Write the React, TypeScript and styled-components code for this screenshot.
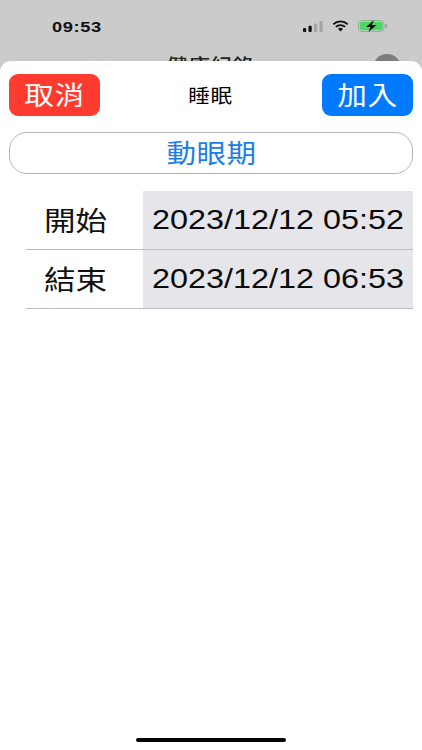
import React from "react";
import styled, { createGlobalStyle } from "styled-components";

const Global = createGlobalStyle`
  html, body { margin: 0; padding: 0; background: #fff; }
  #root { width: 422px; height: 750px; overflow: hidden; }
  * { box-sizing: border-box; }
`;
const cjk = `"Noto Sans CJK TC", "Noto Sans CJK JP", sans-serif`;
const Page = styled.div`
  width: 422px; height: 750px; display: flex; flex-direction: column;
  background: #cbcbcb; font-family: "Liberation Sans", ${cjk};
`;
const Backdrop = styled.header`
  height: 61px; flex: none; overflow: hidden; display: flex; flex-direction: column;
`;
const StatusBar = styled.div`
  height: 52px; flex: none; display: flex; align-items: center; justify-content: space-between;
  padding: 0 35px 0 52px;
`;
const Wide = styled.span<{ $x?: number; $origin?: string }>`
  display: inline-block;
  transform: scaleX(${(p) => p.$x ?? 1.14});
  transform-origin: ${(p) => p.$origin ?? "center"};
`;
const Time = styled.span`
  font-size: 15px; font-weight: 700; color: #111; letter-spacing: 0.5px;
`;
const StatusIcons = styled.div`display: flex; align-items: center; gap: 9px;`;
const NavRow = styled.div`
  position: relative; display: flex; justify-content: center; height: 30px;
`;
const NavTitle = styled.span`font: 500 19px/22px ${cjk}; color: #222; letter-spacing: 0.3px; margin-top: 2px;`;
const Avatar = styled.span`
  position: absolute; right: 21px; top: 2px; width: 28px; height: 28px; border-radius: 50%; background: #7d7d7d;
`;
const Sheet = styled.main`
  flex: 1; background: #fff; border-radius: 11px 11px 0 0; padding: 13px 9px 8px;
  display: flex; flex-direction: column;
`;
const TopBar = styled.div`display: flex; align-items: center; justify-content: space-between; height: 42px;`;
const ActionButton = styled.button<{ $bg: string }>`
  width: 91px; height: 42px; border: 0; border-radius: 9px; background: ${(p) => p.$bg}; color: #fff;
  font: 400 26px/40px ${cjk}; letter-spacing: 0.5px; padding: 0 0 2px;
`;
const SheetTitle = styled.h1`margin: 0; font: 400 19px/22px ${cjk}; color: #000; letter-spacing: 0.5px;`;
const Segment = styled.button`
  margin-top: 16px; height: 42px; flex: none; width: 100%; background: #fff; border: 1px solid #b5b5b9; border-radius: 18px;
  color: #1c7fe6; font: 400 26px/36px ${cjk}; letter-spacing: 0.3px; padding: 0 0 3px;
`;
const Table = styled.section`margin: 17px 0 0 17px; display: flex; flex-direction: column;`;
const Row = styled.div`
  height: 59px; display: grid; grid-template-columns: 117px 1fr; border-bottom: 1px solid #bdbdc2;
`;
const Label = styled.div`
  font: 400 27px/57px ${cjk}; color: #111; padding-left: 18px; letter-spacing: 0;
`;
const Value = styled.div`
  background: #e5e5ea; color: #0a0a0a; font: 400 28px/58px "Liberation Sans", sans-serif;
  text-align: center; white-space: nowrap;
`;
const Spacer = styled.div`flex: 1;`;
const HomeBar = styled.div`
  width: 150px; height: 4px; background: #050505; border-radius: 2px; align-self: center;
`;

const Signal = () => (
  <svg width="20" height="11" viewBox="0 0 20 11">
    <rect x="0" y="7" width="3.2" height="4" rx="1" fill="#111" />
    <rect x="5.5" y="4.8" width="3.2" height="6.2" rx="1" fill="#111" />
    <rect x="11" y="2.4" width="3.2" height="8.6" rx="1" fill="#a5a5a5" />
    <rect x="16.5" y="0" width="3.2" height="11" rx="1" fill="#a5a5a5" />
  </svg>
);
const Wifi = () => (
  <svg width="17" height="12" viewBox="0 0 18 13">
    <path d="M1.2 4.6 A11.5 11.5 0 0 1 16.8 4.6" fill="none" stroke="#111" strokeWidth="2" />
    <path d="M4 7.5 A7.2 7.2 0 0 1 14 7.5" fill="none" stroke="#111" strokeWidth="2" />
    <path d="M9 12.5 L6.3 9.8 A3.8 3.8 0 0 1 11.7 9.8 Z" fill="#111" />
  </svg>
);
const Battery = () => (
  <svg width="29" height="12" viewBox="0 0 29 12">
    <rect x="0.5" y="0.5" width="25.5" height="11" rx="3.4" fill="none" stroke="#8fb58f" />
    <rect x="1.8" y="1.8" width="22.9" height="8.4" rx="2.2" fill="#4bd763" />
    <path d="M27.4 4 a2 2 0 0 1 0 4z" fill="#999" />
    <path d="M16 0 L8 6.9 H12.4 L10.4 12 L18.6 4.9 H14 Z" fill="#111" />
  </svg>
);

export default function App() {
  return (
    <Page>
      <Global />
      <Backdrop>
        <StatusBar>
          <Time>
            <Wide $x={1.22} $origin="left">09:53</Wide>
          </Time>
          <StatusIcons>
            <Signal />
            <Wifi />
            <Battery />
          </StatusIcons>
        </StatusBar>
        <NavRow>
          <NavTitle>
            <Wide>健康紀錄</Wide>
          </NavTitle>
          <Avatar />
        </NavRow>
      </Backdrop>
      <Sheet>
        <TopBar>
          <ActionButton $bg="#ff3b30">
            <Wide>取消</Wide>
          </ActionButton>
          <SheetTitle>
            <Wide>睡眠</Wide>
          </SheetTitle>
          <ActionButton $bg="#007aff">
            <Wide>加入</Wide>
          </ActionButton>
        </TopBar>
        <Segment>
          <Wide>動眼期</Wide>
        </Segment>
        <Table>
          <Row>
            <Label>
              <Wide $x={1.17} $origin="left">開始</Wide>
            </Label>
            <Value>
              <Wide $x={1.155}>2023/12/12 05:52</Wide>
            </Value>
          </Row>
          <Row>
            <Label>
              <Wide $x={1.17} $origin="left">結束</Wide>
            </Label>
            <Value>
              <Wide $x={1.155}>2023/12/12 06:53</Wide>
            </Value>
          </Row>
        </Table>
        <Spacer />
        <HomeBar />
      </Sheet>
    </Page>
  );
}
